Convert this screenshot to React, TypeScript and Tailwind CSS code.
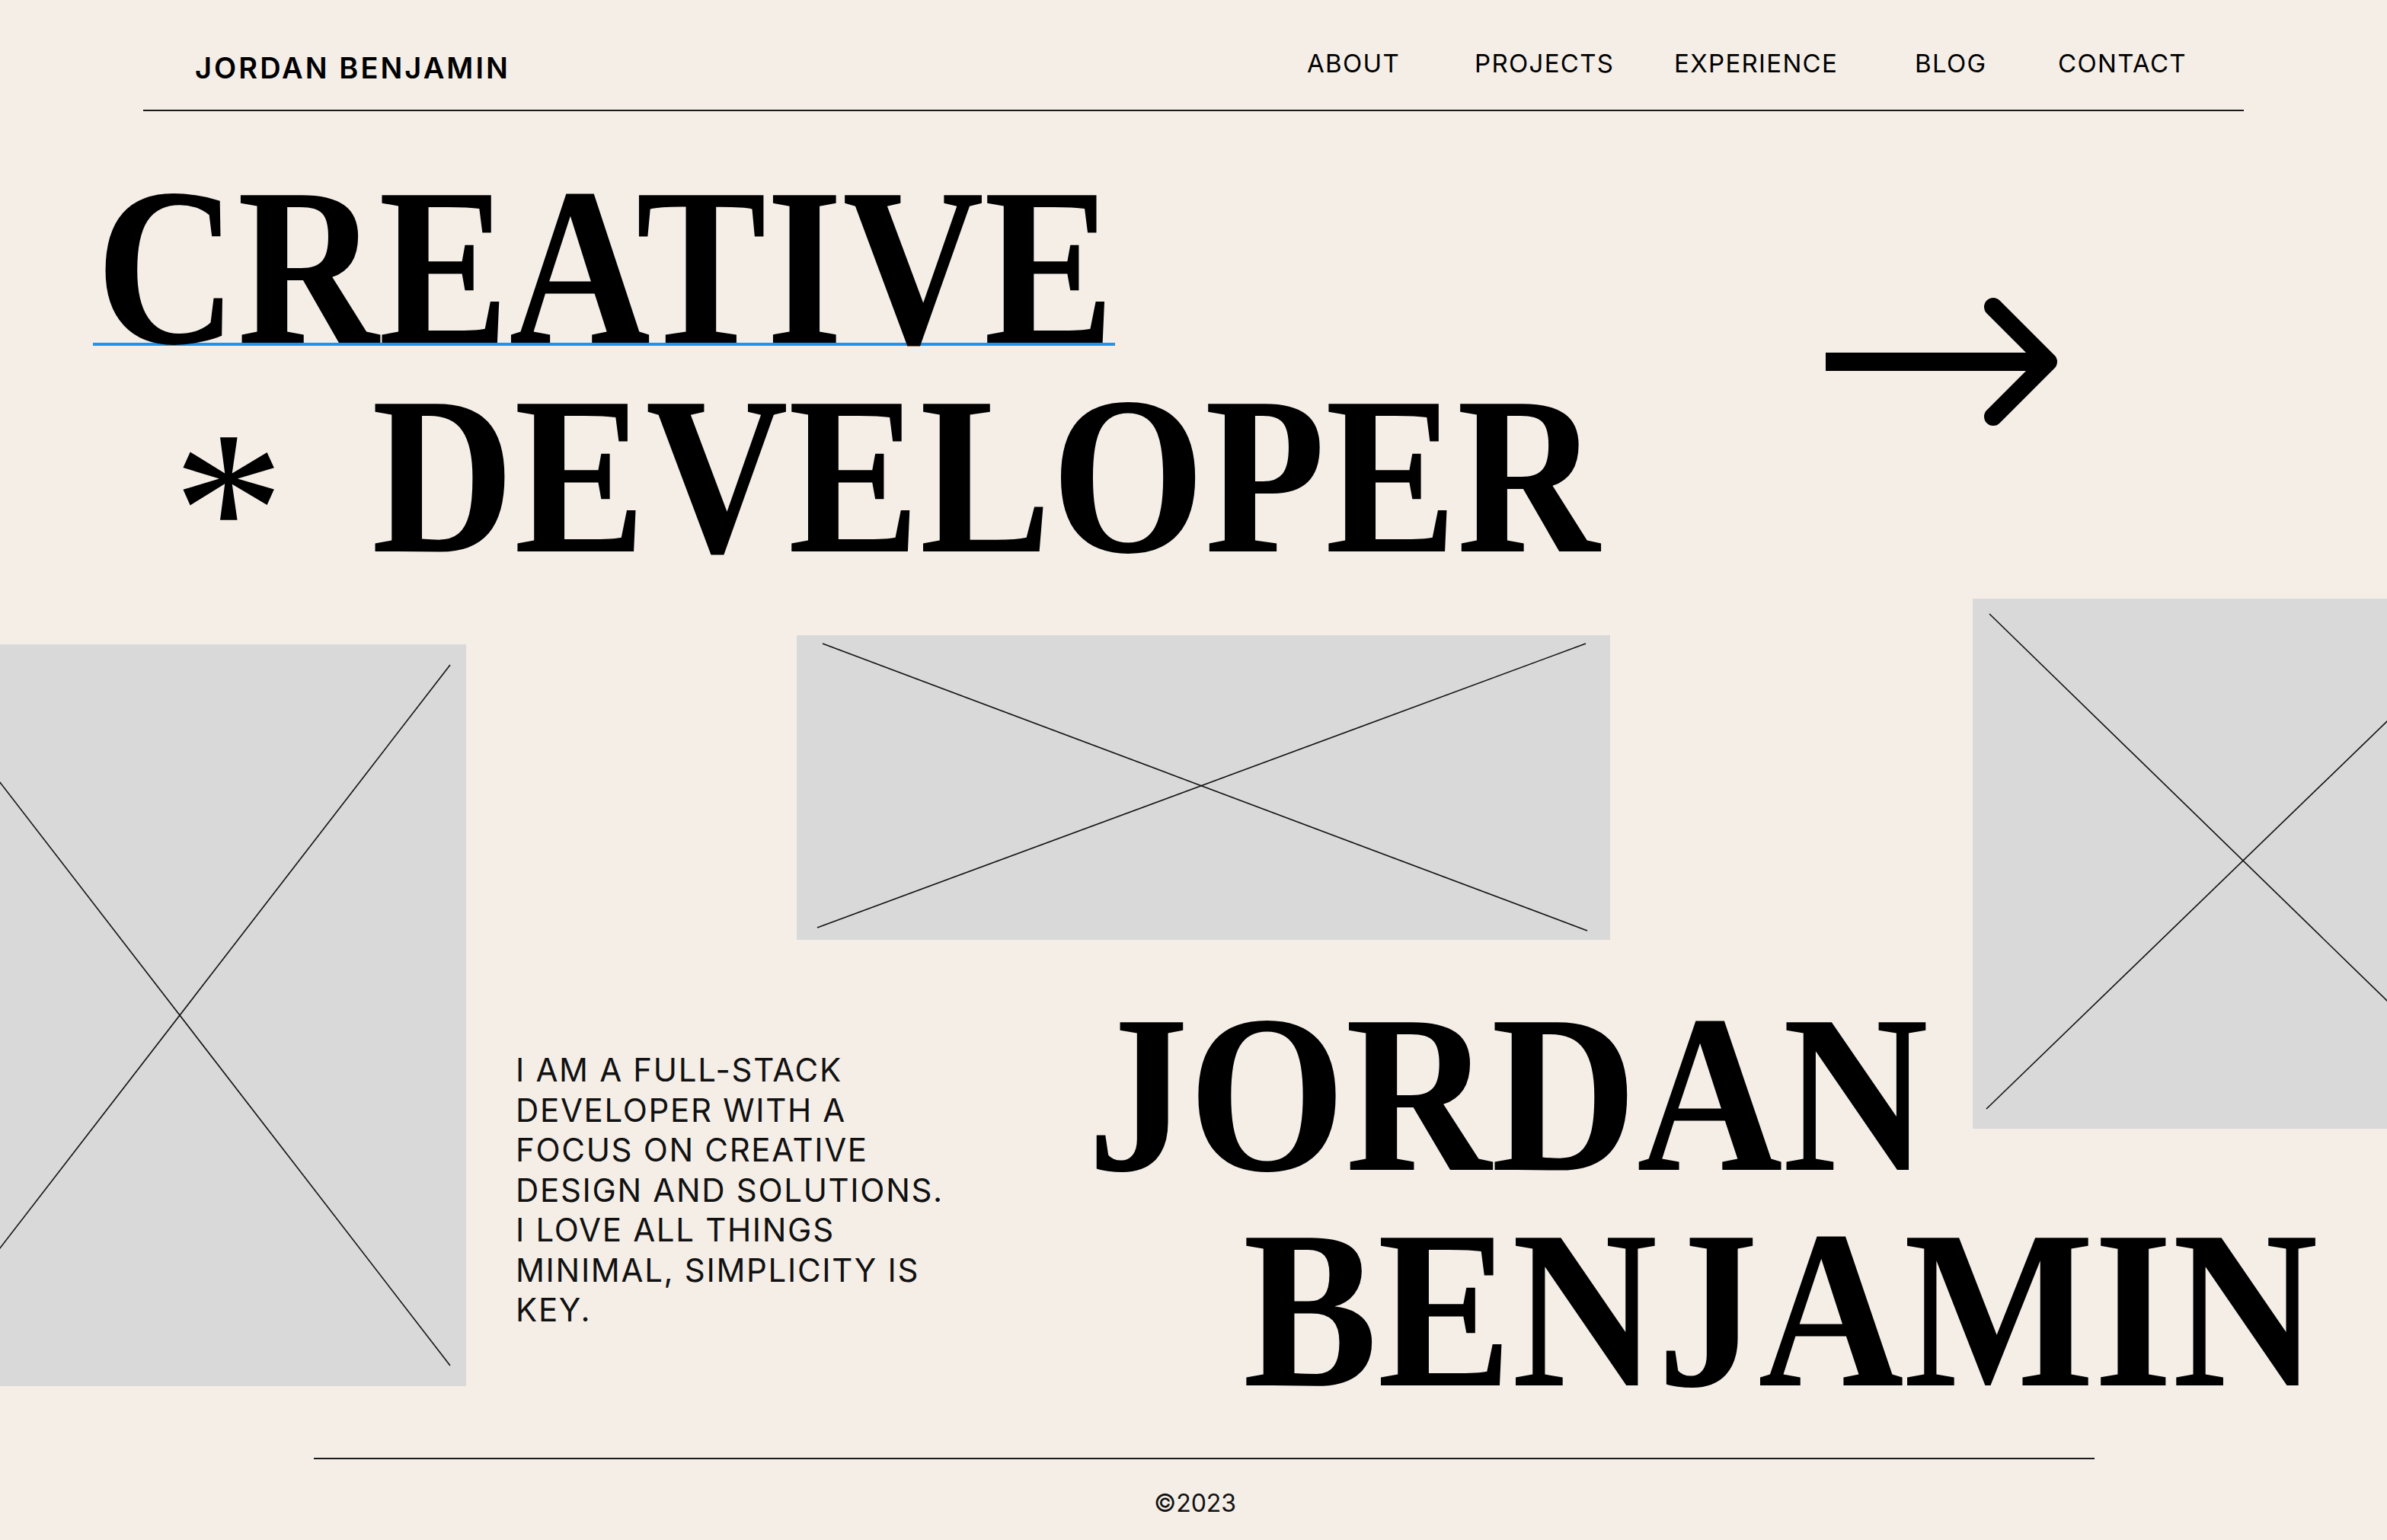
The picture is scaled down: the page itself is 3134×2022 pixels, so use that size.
const sans = "font-['Inter','Liberation_Sans',sans-serif]";
const serif = "font-['Liberation_Serif','Times_New_Roman',serif] font-bold text-[296px] whitespace-nowrap";

const navItems = [
  { label: 'ABOUT', width: 'w-[220px]' },
  { label: 'PROJECTS', width: 'w-[262px]' },
  { label: 'EXPERIENCE', width: 'w-[316px]' },
  { label: 'BLOG', width: 'w-[188px]' },
  { label: 'CONTACT', width: 'w-[160px]' },
];

function Placeholder({
  w,
  h,
  lines,
  className,
}: {
  w: number;
  h: number;
  lines: number[][];
  className: string;
}) {
  return (
    <div className={`relative shrink-0 bg-[#d9d9d9] ${className}`}>
      <svg className="absolute inset-0 h-full w-full" viewBox={`0 0 ${w} ${h}`} fill="none">
        {lines.map(([x1, y1, x2, y2], i) => (
          <line key={i} x1={x1} y1={y1} x2={x2} y2={y2} stroke="#111" strokeWidth="1.6" />
        ))}
      </svg>
    </div>
  );
}

function Arrow() {
  return (
    <svg width="318" height="180" viewBox="0 0 318 180" fill="none" className="shrink-0">
      <line x1="3" y1="89" x2="292" y2="89" stroke="#000" strokeWidth="24" />
      <polyline
        points="223,17 295,89 223,161"
        stroke="#000"
        strokeWidth="24"
        strokeLinecap="round"
        strokeLinejoin="round"
      />
    </svg>
  );
}

export default function App() {
  return (
    <div className="flex h-[2022px] w-full flex-col overflow-hidden bg-[#f4eee7] text-black">
      {/* header */}
      <header
        className={`mx-[188px] flex h-[146px] shrink-0 items-start border-b-2 border-[#1a1a1a] pl-[68px] pr-[84px] pt-[67px] ${sans}`}
      >
        <div className="mt-[3px] text-[38px] font-semibold leading-none tracking-[0.08em]">
          JORDAN BENJAMIN
        </div>
        <nav className="ml-auto flex w-[1146px] items-start text-[33px] font-normal leading-none tracking-[0.04em]">
          {navItems.map((item) => (
            <a key={item.label} className={`${item.width} shrink-0 whitespace-nowrap`}>
              {item.label}
            </a>
          ))}
        </nav>
      </header>

      {/* creative developer */}
      <section className="mt-[67px] flex shrink-0 items-start">
        <div className="flex w-[2394px] shrink-0 flex-col">
          <div className="ml-[122px] h-[241px] w-[1342px] border-b-4 border-[#1f93f0] pl-[4px] pt-[33px]">
            <div className={`${serif} origin-left scale-x-[0.868] leading-[208px]`}>CREATIVE</div>
          </div>
          <div className="mt-[33px] flex h-[274px] items-start pt-[33px]">
            <span
              className={`${serif} ml-[226px] w-[148px] translate-y-[44px] !font-normal leading-[208px]`}
            >
              *
            </span>
            <span className={`${serif} ml-[114px] origin-left scale-x-[0.875] leading-[208px]`}>
              DEVELOPER
            </span>
          </div>
        </div>
        <div className="mt-[173px]">
          <Arrow />
        </div>
      </section>

      {/* gallery + name */}
      <section className="mt-[25px] flex shrink-0 items-start">
        <Placeholder
          w={752}
          h={974}
          className="ml-[-140px] mt-[60px] h-[974px] w-[752px]"
          lines={[
            [21, 27, 731, 947],
            [731, 27, 21, 947],
          ]}
        />
        <div className="flex w-[1978px] shrink-0 flex-col">
          <Placeholder
            w={1068}
            h={400}
            className="ml-[434px] mt-[48px] h-[400px] w-[1068px]"
            lines={[
              [34, 11, 1038, 388],
              [27, 384, 1036, 11],
            ]}
          />
          <div className="mt-[61px] flex items-start">
            <p
              className={`ml-[65px] mt-[84px] w-[700px] shrink-0 text-[42px] font-normal leading-[52.5px] tracking-[0.04em] text-[#111] ${sans}`}
            >
              I AM A FULL-STACK
              <br />
              DEVELOPER WITH A
              <br />
              FOCUS ON CREATIVE
              <br />
              DESIGN AND SOLUTIONS.
              <br />I LOVE ALL THINGS
              <br />
              MINIMAL, SIMPLICITY IS
              <br />
              KEY.
            </p>
            <h1 className="ml-[51px] mt-[37px] flex shrink-0 flex-col">
              <span className={`${serif} origin-left scale-x-[0.895] leading-[208px]`}>JORDAN</span>
              <span
                className={`${serif} ml-[204px] mt-[75px] origin-left scale-x-[0.894] leading-[208px]`}
              >
                BENJAMIN
              </span>
            </h1>
          </div>
        </div>
        <Placeholder
          w={712}
          h={696}
          className="h-[696px] w-[712px]"
          lines={[
            [22, 20, 690, 670],
            [18, 670, 690, 20],
          ]}
        />
      </section>

      {/* footer */}
      <footer className={`mt-[91px] flex shrink-0 flex-col ${sans}`}>
        <div className="ml-[412px] h-[2px] w-[2338px] bg-[#1a1a1a]" />
        <div className="mt-[42px] pl-[4px] text-center text-[32px] leading-none text-[#111]">©2023</div>
      </footer>
    </div>
  );
}
